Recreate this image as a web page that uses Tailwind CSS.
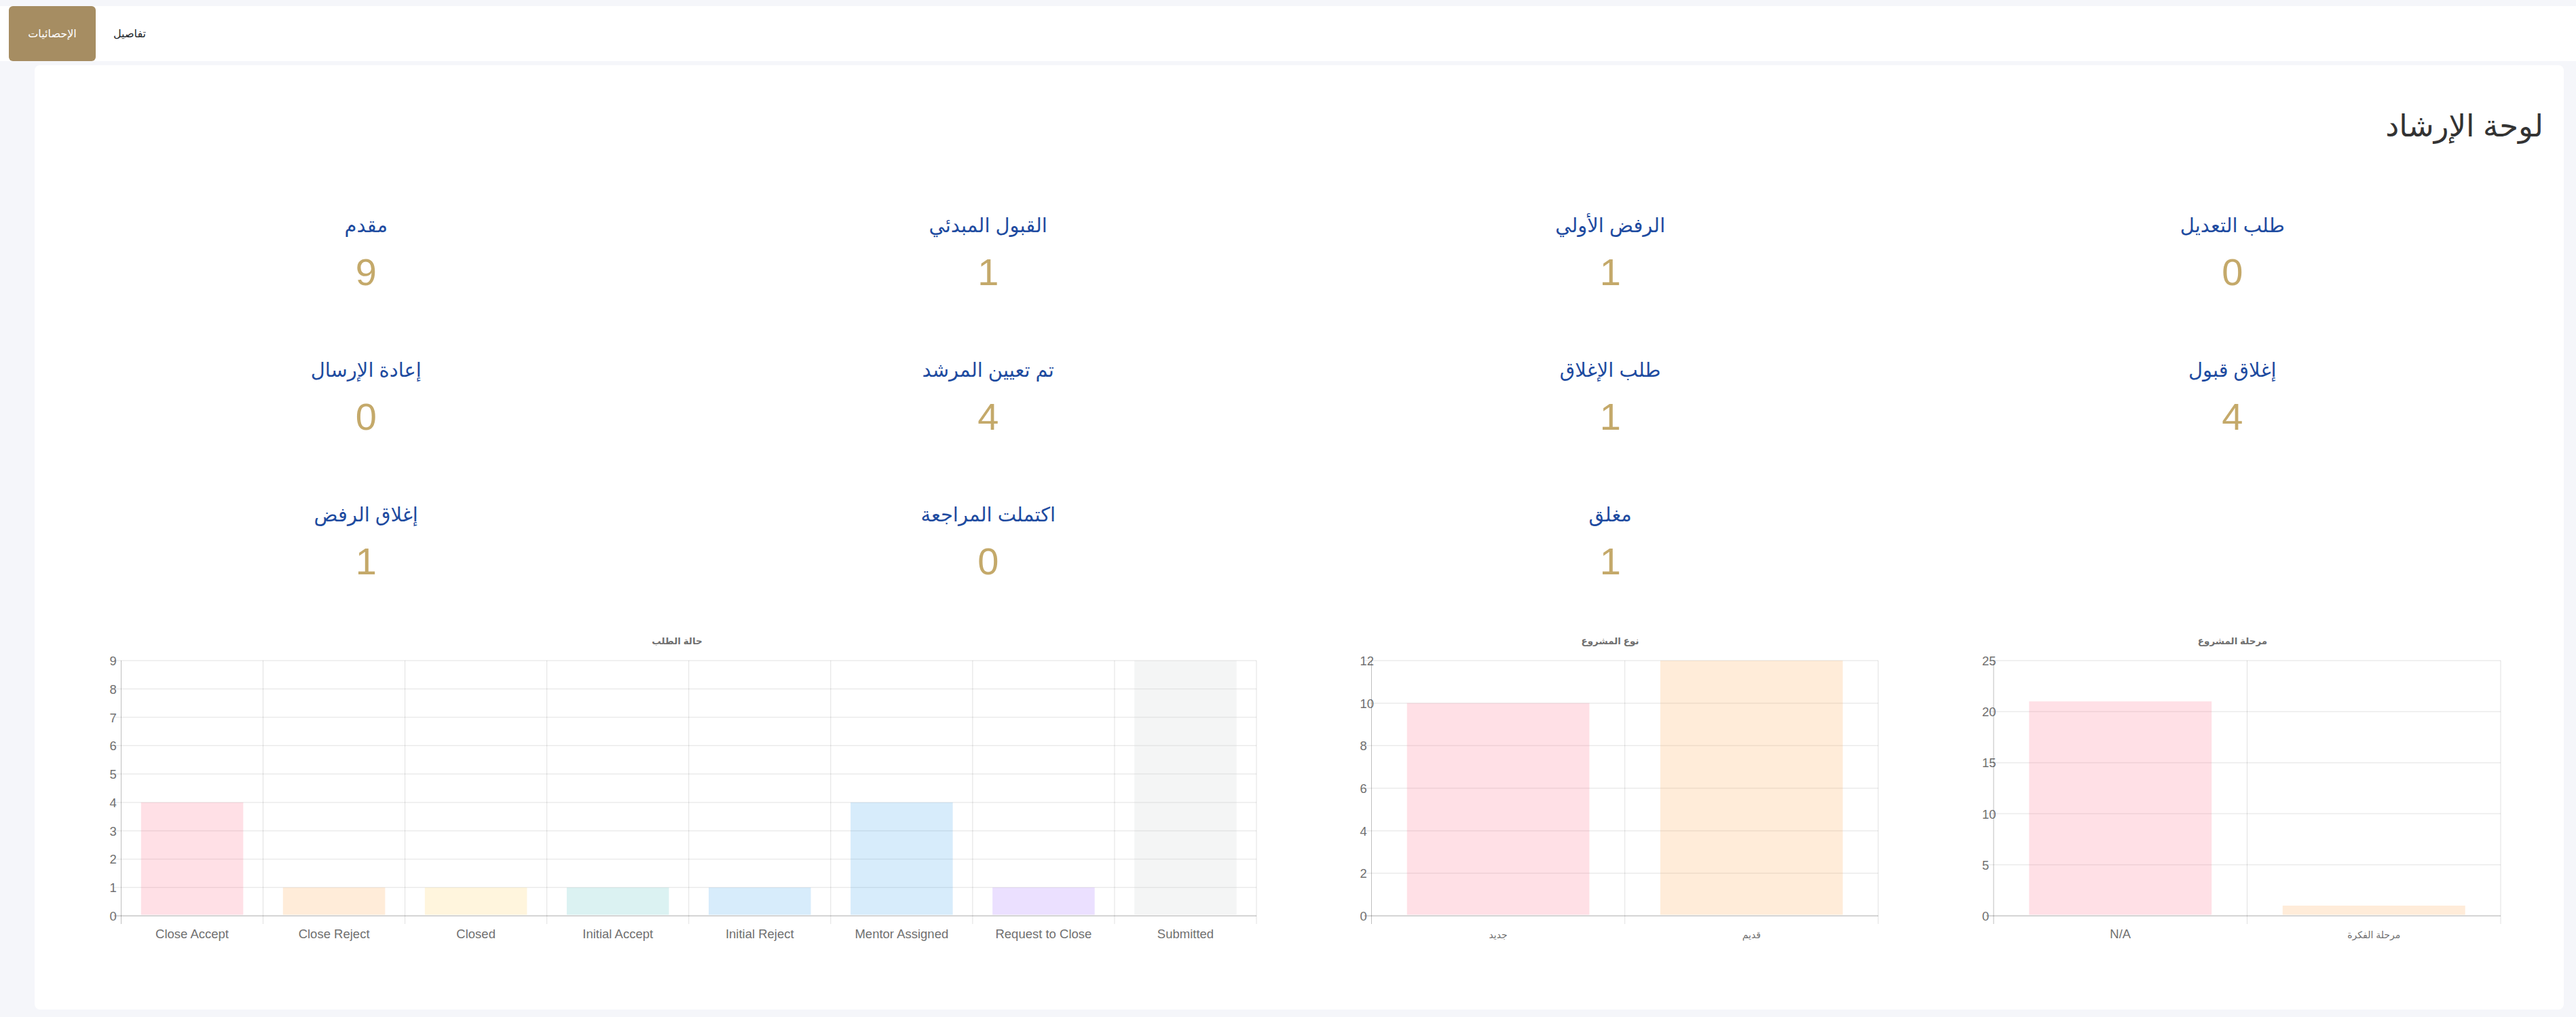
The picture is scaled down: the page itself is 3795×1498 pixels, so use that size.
<!DOCTYPE html>
<html lang="ar">
<head>
    <meta charset="UTF-8">
    <title>لوحة الإرشاد</title>
    <script src="https://cdn.jsdelivr.net/npm/@tailwindcss/browser@4"></script>
</head>
<body class="bg-[#f5f6fa] h-[1498px] overflow-hidden pt-[9px] font-['Liberation_Sans','DejaVu_Sans',sans-serif]">
    <!-- Navbar -->
    <nav class="bg-white h-[81px] flex items-center pl-[13px]">
        <a class="bg-[#a68d62] text-white text-[16px] h-full w-[128px] rounded-[6px] flex items-center justify-center">الإحصائيات</a>
        <a class="text-[#212529] text-[16px] ml-[26px]">تفاصيل</a>
    </nav>

    <!-- Dashboard card -->
    <main dir="rtl" class="bg-white h-[1391px] mt-[6px] ml-[51px] mr-[18px] rounded-[8px] px-[30px]">
        <h1 class="text-[45px] leading-[60px] text-[#333333] pt-[60px] h-[209px]">لوحة الإرشاد</h1>

        <section class="grid grid-cols-4 auto-rows-[213px] text-center">
            <div><p class="text-[29px] leading-[54px] text-[#1e4ba0]">طلب التعديل</p><p class="text-[56px] leading-[84px] text-[#c4a96a]">0</p></div>
            <div><p class="text-[29px] leading-[54px] text-[#1e4ba0]">الرفض الأولي</p><p class="text-[56px] leading-[84px] text-[#c4a96a]">1</p></div>
            <div><p class="text-[29px] leading-[54px] text-[#1e4ba0]">القبول المبدئي</p><p class="text-[56px] leading-[84px] text-[#c4a96a]">1</p></div>
            <div><p class="text-[29px] leading-[54px] text-[#1e4ba0]">مقدم</p><p class="text-[56px] leading-[84px] text-[#c4a96a]">9</p></div>
            <div><p class="text-[29px] leading-[54px] text-[#1e4ba0]">إغلاق قبول</p><p class="text-[56px] leading-[84px] text-[#c4a96a]">4</p></div>
            <div><p class="text-[29px] leading-[54px] text-[#1e4ba0]">طلب الإغلاق</p><p class="text-[56px] leading-[84px] text-[#c4a96a]">1</p></div>
            <div><p class="text-[29px] leading-[54px] text-[#1e4ba0]">تم تعيين المرشد</p><p class="text-[56px] leading-[84px] text-[#c4a96a]">4</p></div>
            <div><p class="text-[29px] leading-[54px] text-[#1e4ba0]">إعادة الإرسال</p><p class="text-[56px] leading-[84px] text-[#c4a96a]">0</p></div>
            <div></div>
            <div><p class="text-[29px] leading-[54px] text-[#1e4ba0]">مغلق</p><p class="text-[56px] leading-[84px] text-[#c4a96a]">1</p></div>
            <div><p class="text-[29px] leading-[54px] text-[#1e4ba0]">اكتملت المراجعة</p><p class="text-[56px] leading-[84px] text-[#c4a96a]">0</p></div>
            <div><p class="text-[29px] leading-[54px] text-[#1e4ba0]">إغلاق الرفض</p><p class="text-[56px] leading-[84px] text-[#c4a96a]">1</p></div>
        </section>

        <!-- Charts -->
        <section class="grid grid-cols-[1fr_1fr_2fr] mt-[-19px]">
            <div class="px-[62px]"><svg id="stage" dir="ltr" class="block w-full h-[480px]"></svg></div>
            <div class="px-[62px]"><svg id="type" dir="ltr" class="block w-full h-[480px]"></svg></div>
            <div class="px-[62px]"><svg id="status" dir="ltr" class="block w-full h-[480px]"></svg></div>
        </section>
    </main>

    <script>
        const colors = ['rgba(255,99,132,.2)', 'rgba(255,159,64,.2)', 'rgba(255,205,86,.2)', 'rgba(75,192,192,.2)', 'rgba(54,162,235,.2)', 'rgba(54,162,235,.2)', 'rgba(153,102,255,.2)', 'rgba(201,203,207,.2)'];
        const TOP = 48, BOTTOM = 424;

        function drawChart(id, title, width, left, right, max, step, labels, values) {
            const cat = (right - left) / labels.length, y = v => BOTTOM - (BOTTOM - TOP) * v / max;
            let s = '';
            s += `<text x="${width / 2}" y="24" text-anchor="middle" font-size="13.5" font-weight="700" fill="#707070">${title}</text>`;
            for (let v = 0; v <= max; v += step) {
                const stroke = v === 0 ? 'rgba(0,0,0,.22)' : 'rgba(0,0,0,.08)';
                s += `<line x1="${left - 11}" x2="${right}" y1="${y(v)}" y2="${y(v)}" stroke="${stroke}" stroke-width="1.5"/>`;
                s += `<text x="${left - 17}" y="${y(v) + 7}" text-anchor="end" font-size="18.5" fill="#707070">${v}</text>`;
            }
            labels.forEach((label, i) => {
                const x = left + cat * i, h = y(values[i]);
                s += `<line x1="${x}" x2="${x}" y1="${TOP}" y2="${BOTTOM + 12}" stroke="${i ? 'rgba(0,0,0,.12)' : 'rgba(0,0,0,.25)'}"/>`;
                s += `<rect x="${x + cat * .14}" y="${h}" width="${cat * .72}" height="${BOTTOM - 1.5 - h}" fill="${colors[i]}"/>`;
                const arabic = /[\u0600-\u06ff]/.test(label);
                s += `<text x="${x + cat / 2}" y="${BOTTOM + 33}" text-anchor="middle" font-size="${arabic ? 14 : 18.5}" fill="#707070">${label}</text>`;
            });
            s += `<line x1="${right}" x2="${right}" y1="${TOP}" y2="${BOTTOM + 12}" stroke="rgba(0,0,0,.12)"/>`;
            document.getElementById(id).innerHTML = s;
        }

        drawChart('stage', 'مرحلة المشروع', 792, 44, 791, 25, 5, ['N/A', 'مرحلة الفكرة'], [21, 1]);
        drawChart('type', 'نوع المشروع', 792, 44.5, 791, 12, 2, ['جديد', 'قديم'], [10, 12]);
        drawChart('status', 'حالة الطلب', 1709, 35.5, 1708, 9, 1,
            ['Close Accept', 'Close Reject', 'Closed', 'Initial Accept', 'Initial Reject', 'Mentor Assigned', 'Request to Close', 'Submitted'],
            [4, 1, 1, 1, 1, 4, 1, 9]);
    </script>
</body>
</html>
